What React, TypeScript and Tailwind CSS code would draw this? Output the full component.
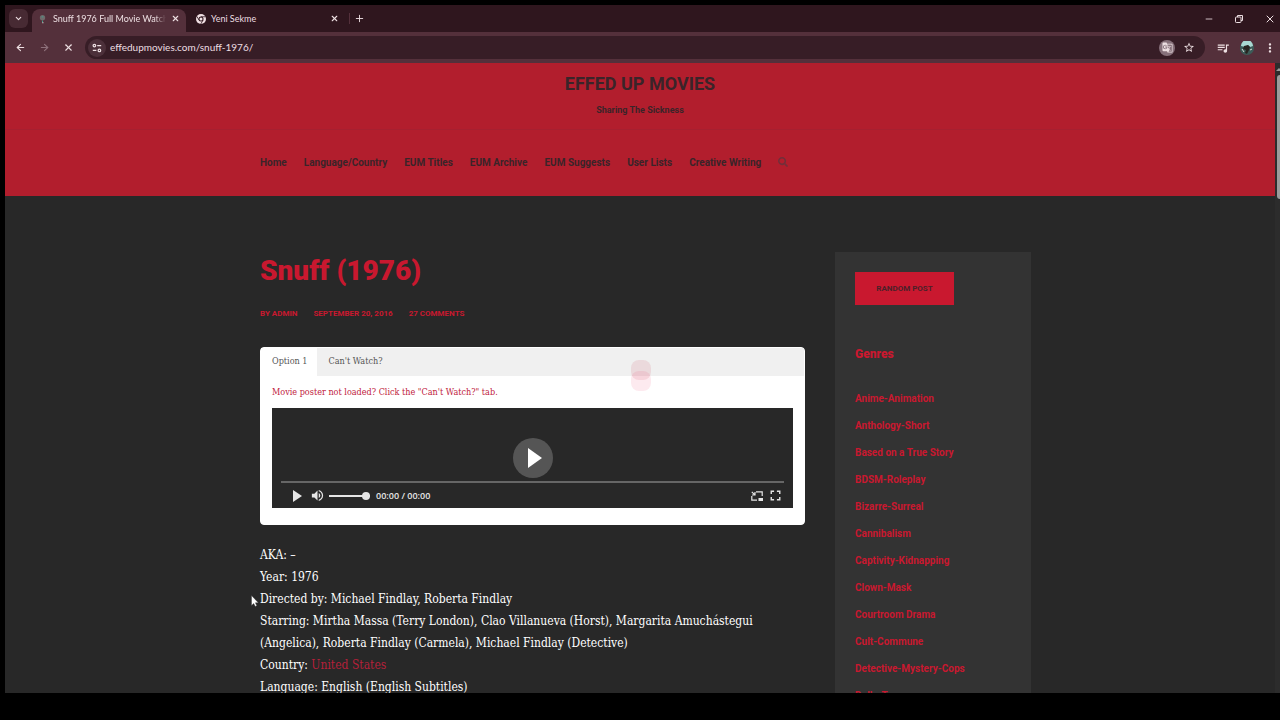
import type { ReactNode } from "react";
import { ArrowLeft, ArrowRight, ChevronDown, Minus, Plus, X } from "lucide-react";
import { FaSearch } from "react-icons/fa";
import { MdFullscreen, MdGTranslate, MdMoreVert, MdQueueMusic, MdStarBorder, MdVolumeUp } from "react-icons/md";

const navItems = ["Home", "Language/Country", "EUM Titles", "EUM Archive", "EUM Suggests", "User Lists", "Creative Writing"];

const genres = [
  "Anime-Animation",
  "Anthology-Short",
  "Based on a True Story",
  "BDSM-Roleplay",
  "Bizarre-Surreal",
  "Cannibalism",
  "Captivity-Kidnapping",
  "Clown-Mask",
  "Courtroom Drama",
  "Cult-Commune",
  "Detective-Mystery-Cops",
  "Dolls-Toys"
];

function IconButton({ label, className = "", children }: { label: string; className?: string; children: ReactNode }) {
  return (
    <button type="button" aria-label={label} className={`flex shrink-0 items-center justify-center ${className}`}>
      {children}
    </button>
  );
}

function ChromeLogo() {
  return (
    <svg viewBox="0 0 20 20" className="size-[10px] shrink-0">
      <circle cx="10" cy="10" r="10" fill="#f0dfe3" />
      <path d="M10 5.5h9M6 12.2 1.6 4.6M14 12.2 9.5 20" stroke="#2f161e" strokeWidth="1.6" />
      <circle cx="10" cy="10" r="5" fill="#2f161e" />
      <circle cx="10" cy="10" r="3" fill="#f0dfe3" />
    </svg>
  );
}

function TabStrip() {
  return (
    <div className="flex h-[27px] items-end bg-[#2f161e] pl-1 font-['Lato',sans-serif] text-[9px] text-[#eddfe2]">
      <IconButton label="Search tabs" className="mb-1 size-[19px] rounded-md bg-[#472a33]">
        <ChevronDown size={9} strokeWidth={3} />
      </IconButton>
      <div className="ml-1 flex h-[23px] w-[154px] items-center rounded-t-lg bg-[#54303b] px-1.5 pb-1">
        <svg viewBox="0 0 10 12" className="h-[10px] w-[9px] shrink-0">
          <circle cx="5" cy="4.5" r="3.2" fill="#6f6a6b" />
          <path d="M4 3.5h2M5 8v2" stroke="#3fa08c" strokeWidth="1.2" />
          <path d="M4.4 10.5h2" stroke="#c9c0c2" />
        </svg>
        <span className="ml-1.5 flex-1 overflow-hidden mask-r-from-90% whitespace-nowrap">Snuff 1976 Full Movie Watch On</span>
        <IconButton label="Close tab" className="ml-1 size-[10px]">
          <X size={9} strokeWidth={3} />
        </IconButton>
      </div>
      <div className="flex h-[23px] w-[163px] items-center pb-1 pl-[10px]">
        <ChromeLogo />
        <span className="ml-[5px] flex-1">Yeni Sekme</span>
        <IconButton label="Close tab" className="mr-2 size-[14px]">
          <X size={9} strokeWidth={3} />
        </IconButton>
      </div>
      <IconButton label="New tab" className="mb-2 h-[11px] w-5 border-l border-[#54303b]">
        <Plus size={11} strokeWidth={2} />
      </IconButton>
      <div className="ml-auto flex h-full items-center gap-5 pr-1">
        <IconButton label="Minimize">
          <Minus size={10} strokeWidth={2} />
        </IconButton>
        <IconButton label="Restore">
          <svg viewBox="0 0 10 10" className="size-[10px]" fill="none" stroke="currentColor">
            <rect x="1.5" y="3" width="5.5" height="5.5" rx="0.8" />
            <path d="M3.5 3V1.5h5v5H7" />
          </svg>
        </IconButton>
        <IconButton label="Close">
          <X size={12} strokeWidth={2} />
        </IconButton>
      </div>
    </div>
  );
}

function Toolbar() {
  return (
    <div className="flex h-[31px] items-center bg-[#54303b] pl-2 font-['Lato',sans-serif] text-[#eddfe2]">
      <IconButton label="Back" className="size-[14px]">
        <ArrowLeft size={11} strokeWidth={2.4} />
      </IconButton>
      <IconButton label="Forward" className="ml-[10px] size-[14px] text-[#8d707a]">
        <ArrowRight size={11} strokeWidth={2.4} />
      </IconButton>
      <IconButton label="Stop" className="ml-[10px] size-[14px]">
        <X size={11} strokeWidth={2.4} />
      </IconButton>
      <div className="ml-[10px] flex h-[23px] flex-1 items-center rounded-full bg-[#371d26] pr-[10px] pl-[3px]">
        <IconButton label="Site information" className="size-[18px] rounded-full bg-[#4c303a]">
          <svg viewBox="0 0 10 10" className="size-[10px]" fill="none" stroke="currentColor" strokeWidth="1.2">
            <circle cx="2.4" cy="2.6" r="1.3" />
            <path d="M5.2 2.6h4M.8 7.4h3.6" />
            <circle cx="7.4" cy="7.4" r="1.3" />
          </svg>
        </IconButton>
        <input
          aria-label="Address"
          defaultValue="effedupmovies.com/snuff-1976/"
          className="ml-1 min-w-0 flex-1 bg-transparent text-[10px] outline-none"
        />
        <IconButton label="Translate" className="size-4 rounded-full bg-[#86707a]">
          <MdGTranslate size={11} />
        </IconButton>
        <IconButton label="Bookmark" className="ml-2 size-[12px]">
          <MdStarBorder size={13} />
        </IconButton>
      </div>
      <IconButton label="Media controls" className="ml-3 size-[12px]">
        <MdQueueMusic size={14} className="shrink-0" />
      </IconButton>
      <IconButton label="Profile" className="ml-[11px] size-[14px]">
        <svg viewBox="0 0 14 14" className="size-[14px]">
          <circle cx="7" cy="7" r="7" fill="#3c5b58" />
          <path d="M1 5a6 6 0 0 1 12 0l-3 1-2-2-3 2z" fill="#a9d8d2" />
          <path d="M4 5l4-1 2 2-1 3-2 4-2-1 1-3-3-1z" fill="#282420" />
          <path d="m2 8 2 3M10 9l2-1" stroke="#d5dcd5" />
        </svg>
      </IconButton>
      <IconButton label="Menu" className="mr-[2px] ml-2 w-4">
        <MdMoreVert size={14} />
      </IconButton>
    </div>
  );
}

function SiteHeader() {
  return (
    <header className="h-[133px] bg-[#b21e2d] font-bold text-[#3a2429]">
      <div className="flex h-[67px] flex-col items-center border-b border-[#a72030] pt-[7px]">
        <a href="#" className="text-[18px] leading-7">
          EFFED UP MOVIES
        </a>
        <p className="mt-1 text-[9px] leading-4">Sharing The Sickness</p>
      </div>
      <nav className="mx-auto flex h-16 max-w-[760px] items-center gap-[17px] text-[10px]">
        {navItems.map((item) => (
          <a key={item} href="#" className="whitespace-nowrap">
            {item}
          </a>
        ))}
        <IconButton label="Search" className="text-[#722f3a]">
          <FaSearch size={10} />
        </IconButton>
      </nav>
    </header>
  );
}

function VideoPlayer() {
  return (
    <div className="relative flex h-[100px] flex-col justify-end bg-[#282828] px-[9px] text-[#e6e6e6]">
      <IconButton label="Play video" className="absolute top-[30px] left-1/2 size-10 -translate-x-1/2 rounded-full bg-[#555] text-white">
        <svg viewBox="0 0 14 20" className="ml-1 h-5 w-[14px]">
          <path d="M0 0v20l14-10z" fill="currentColor" />
        </svg>
      </IconButton>
      <div className="h-[2px] bg-[#666]" />
      <div className="flex h-[25px] items-center pl-2">
        <IconButton label="Play" className="size-4">
          <svg viewBox="0 0 9 12" className="h-3 w-[9px]">
            <path d="M0 0v12l9-6z" fill="currentColor" />
          </svg>
        </IconButton>
        <IconButton label="Mute" className="ml-1 size-4">
          <MdVolumeUp size={15} />
        </IconButton>
        <input
          type="range"
          aria-label="Volume"
          defaultValue={100}
          className="ml-1 h-[2px] w-[41px] appearance-none bg-[#e6e6e6] [&::-webkit-slider-thumb]:size-2 [&::-webkit-slider-thumb]:appearance-none [&::-webkit-slider-thumb]:rounded-full [&::-webkit-slider-thumb]:bg-[#e6e6e6]"
        />
        <span className="ml-[6px] font-['Open_Sans',sans-serif] text-[9px] font-semibold">00:00 / 00:00</span>
        <IconButton label="Picture in picture" className="ml-auto">
          <svg viewBox="0 0 12 10" className="h-[10px] w-3" fill="none" stroke="currentColor" strokeWidth="1.2">
            <path d="M5 .8h6.2V5M.8 5v4.2H6M.8.8l3 3M1 4h3V1" />
            <path d="M7.5 7H12v3H7.5z" fill="currentColor" stroke="none" />
          </svg>
        </IconButton>
        <IconButton label="Fullscreen" className="ml-1">
          <MdFullscreen size={17} />
        </IconButton>
      </div>
    </div>
  );
}

function Article() {
  return (
    <article className="w-[545px] shrink-0">
      <h1 className="text-[28px] leading-[38px] font-black text-[#c9182f]">Snuff (1976)</h1>
      <div className="mt-[18px] flex gap-4 text-[8px] leading-3 font-bold text-[#c9182f] uppercase">
        <a href="#">By admin</a>
        <a href="#">September 20, 2016</a>
        <a href="#">27 Comments</a>
      </div>

      <section className="mt-[27px] rounded-sm border border-white bg-white pb-4 font-['DejaVu_Serif_Condensed','DejaVu_Serif',serif]">
        <div className="flex h-7 bg-[#f0f0f0] text-[9px] text-[#555]">
          <button type="button" className="bg-white pr-[10px] pl-[11px]">
            Option 1
          </button>
          <button type="button" className="px-[11px]">
            Can't Watch?
          </button>
        </div>
        <div className="px-[11px]">
          <p className="py-2 text-[9px] leading-4 text-[#c0203c]">Movie poster not loaded? Click the "Can't Watch?" tab.</p>
          <VideoPlayer />
        </div>
      </section>

      <div className="mt-[19px] font-['DejaVu_Serif_Condensed','DejaVu_Serif',serif] text-[12px] leading-[22px] text-white">
        <p>AKA: –</p>
        <p>Year: 1976</p>
        <p>Directed by: Michael Findlay, Roberta Findlay</p>
        <p>
          Starring: Mirtha Massa (Terry London), Clao Villanueva (Horst), Margarita Amuchástegui (Angelica), Roberta Findlay (Carmela), Michael
          Findlay (Detective)
        </p>
        <p>
          Country:{" "}
          <a href="#" className="text-[#b5203a]">
            United States
          </a>
        </p>
        <p>Language: English (English Subtitles)</p>
      </div>
    </article>
  );
}

function Sidebar() {
  return (
    <aside className="flex-1 bg-[#333] p-5 font-bold text-[#c9182f]">
      <button type="button" className="h-[33px] w-[99px] bg-[#c9182f] text-[8px] text-[#4c2029]">
        RANDOM POST
      </button>
      <h2 className="mt-10 text-[12px] leading-[18px] font-black">Genres</h2>
      <ul className="mt-[22px] text-[10px] leading-[27px]">
        {genres.map((g) => (
          <li key={g}>
            <a href="#">{g}</a>
          </li>
        ))}
      </ul>
    </aside>
  );
}

export default function App() {
  return (
    <div className="flex h-screen flex-col overflow-hidden bg-black pt-[5px] pb-[27px] pl-[5px] font-['Roboto',sans-serif]">
      <TabStrip />
      <Toolbar />
      <div className="relative flex min-h-0 flex-1 bg-[#282828]">
        <div className="min-w-0 flex-1 overflow-hidden">
          <SiteHeader />
          <main className="mx-auto flex max-w-[782px] gap-[30px] pt-14 pl-[11px]">
            <Article />
            <Sidebar />
          </main>
        </div>
        <div className="flex w-[5px] shrink-0 flex-col items-end bg-[#2c2c2c]">
          <svg viewBox="0 0 4 12" className="h-3 w-1">
            <path d="M0 8l3-3 1 1v2z" fill="#9b9b9b" />
          </svg>
          <div className="h-[124px] w-[3px] rounded-l-full bg-[#9b9b9b]" />
        </div>

        {/* page loader */}
        <div className="absolute top-[297px] left-1/2 -ml-[12px] w-5">
          <div className="h-5 rounded-lg bg-[#c9182f]/10" />
          <div className="-mt-[9px] h-5 rounded-lg bg-[#f03060]/10" />
        </div>

        {/* mouse pointer */}
        <svg viewBox="0 0 8 12" className="absolute top-[532px] left-[246px] h-3 w-2">
          <path d="M.5.5v10l2.200-2 1.600 3 1.500-.7-1.400-3h3z" fill="#fff" stroke="#333" strokeWidth=".4" />
        </svg>
      </div>
    </div>
  );
}
